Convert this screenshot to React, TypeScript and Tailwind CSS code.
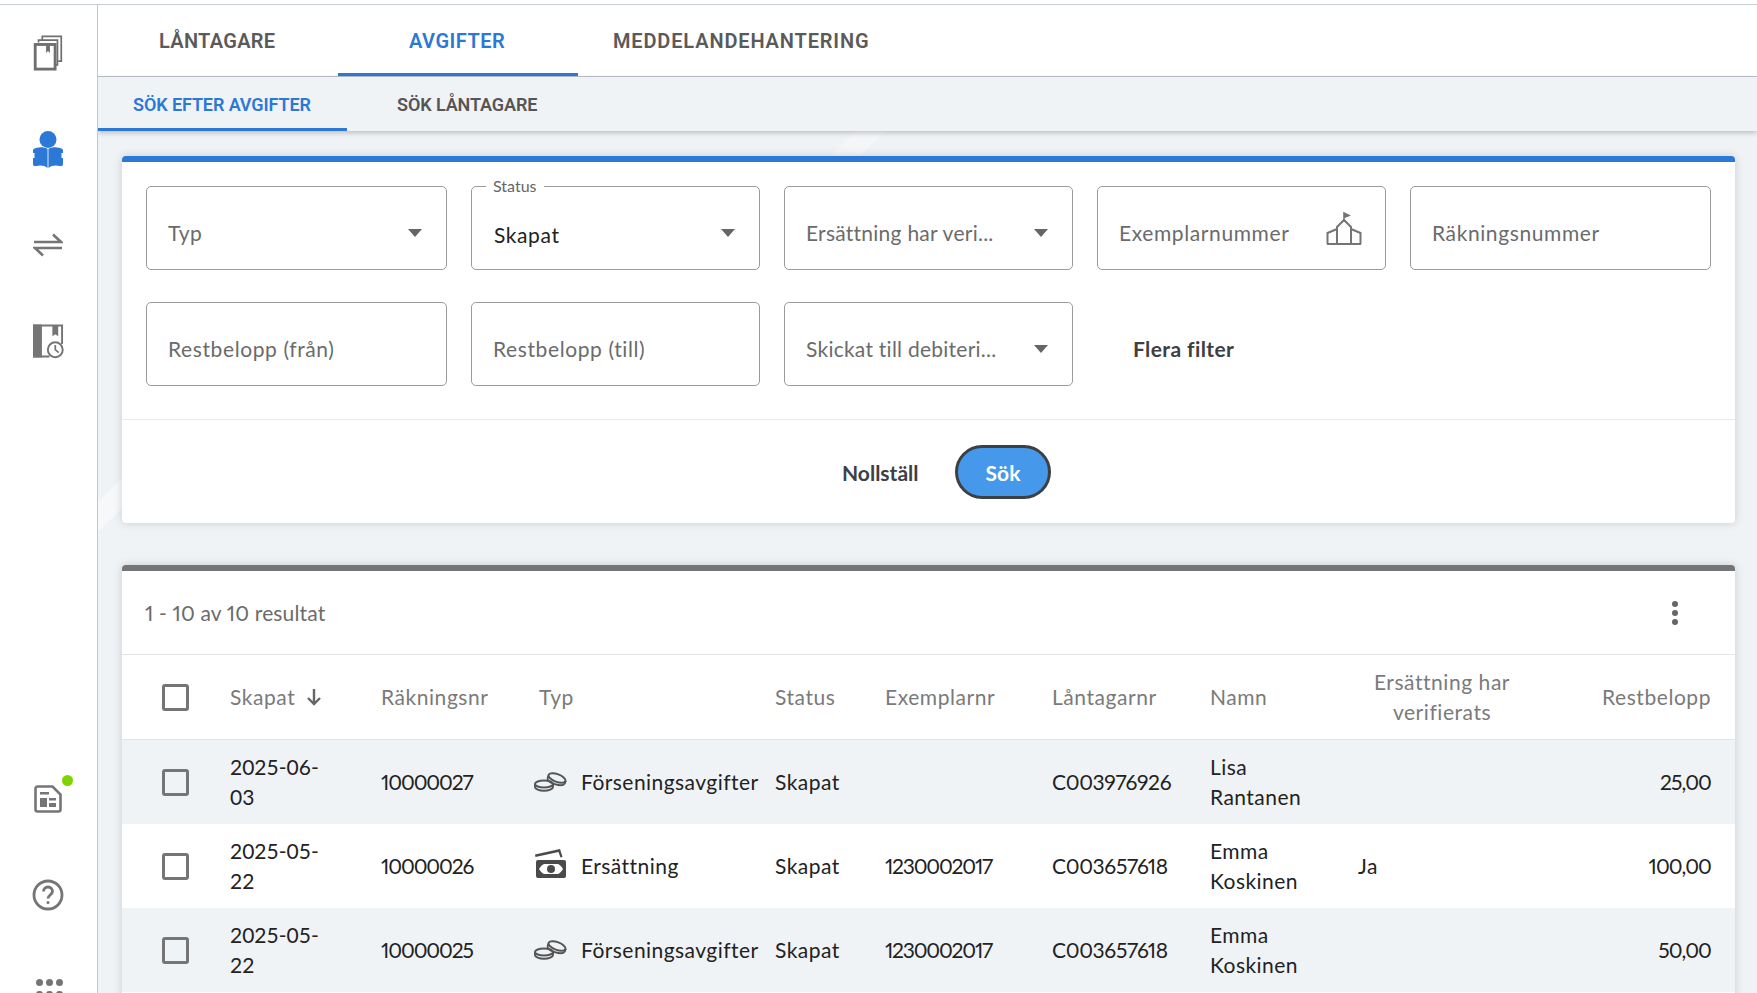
import React from "react";

const BODY = "[font-family:Lato,sans-serif]";
const TAB = "[font-family:Roboto,sans-serif]";

const Caret = () => (
  <svg width="16" height="8" viewBox="0 0 16 8" className="absolute right-[23px] top-[42px]">
    <path d="M1 0h14L8 8z" fill="#666" />
  </svg>
);

// library building with flag, sits in the Exemplarnummer field
const SchoolIcon = () => (
  <svg width="36" height="33" viewBox="0 0 36 33" fill="none" stroke="#757575" strokeWidth="2" className="absolute right-[23px] top-[25px]">
    <path d="M18 10V1l5 2.500-5 2" fill="#757575" strokeWidth="1.600" />
    <path d="M11 32V15l7-7 7 7v17M1.500 32V21l9.500-4M34.500 32V21L25 17M1 32h34" />
  </svg>
);

const CoinsIcon = () => (
  <svg width="34" height="20" viewBox="0 0 34 20" fill="none" stroke="#555" strokeWidth="2">
    <ellipse cx="10" cy="12" rx="9" ry="3.600" />
    <path d="M1 12v3c0 2 4 3.800 9 3.800s9-1.800 9-3.800v-3" />
    <ellipse cx="23" cy="6" rx="9" ry="3.800" transform="rotate(20 23 6)" fill="#f0f3f6" />
    <path d="M14.500 3.500l-.8 2.800c-.6 2 2.600 4.400 7 5.800 4.400 1.400 8.800 1.300 10-.6l1.200-3" />
  </svg>
);

const MoneyIcon = () => (
  <svg width="32" height="29" viewBox="0 0 32 29" className="-mt-[6px]">
    <path d="M1 5.500L26 0l2.500 8-2 .5-2-5.500L1.500 8z" fill="#4a4a4a" />
    <rect x="2" y="11" width="30" height="18" rx="2" fill="#4a4a4a" />
    <path d="M5 20c2-3 3-4 5-5h14c2 1 3 2 5 5-2 3-3 4-5 5H10c-2-1-3-2-5-5z" fill="#fff" />
    <circle cx="17" cy="20" r="4" fill="#4a4a4a" />
  </svg>
);

const Field = ({ label, w, select, value, legend, school }: { label?: string; w: string; select?: boolean; value?: string; legend?: string; school?: boolean }) => (
  <div className={`relative h-[84px] shrink-0 rounded-[5px] border border-[#9b9b9b] ${w}`}>
    {legend && (
      <span className="absolute left-[14px] top-[-10px] bg-white px-[7px] text-[16px] leading-[18px] text-[#666]">{legend}</span>
    )}
    {value ? (
      <span className="absolute left-[22px] top-[33px] text-[21px] leading-[30px] tracking-[0.6px] text-[#222]">{value}</span>
    ) : (
      <span className={`absolute left-[21px] top-[31px] text-[21px] leading-[30px] text-[#6b6b6b] ${select ? "tracking-[0.25px]" : "tracking-[0.6px]"}`}>{label}</span>
    )}
    {select && <Caret />}
    {school && <SchoolIcon />}
  </div>
);

const Checkbox = () => <div className="h-[27px] w-[27px] rounded-[3px] border-[3px] border-[#757575]" />;

type Row = { date: [string, string]; nr: string; kind: "fee" | "comp"; ex: string; borrower: string; name: [string, string]; ja?: boolean; amount: string };

const rows: Row[] = [
  { date: ["2025-06-", "03"], nr: "10000027", kind: "fee", ex: "", borrower: "C003976926", name: ["Lisa", "Rantanen"], amount: "25,00" },
  { date: ["2025-05-", "22"], nr: "10000026", kind: "comp", ex: "1230002017", borrower: "C003657618", name: ["Emma", "Koskinen"], ja: true, amount: "100,00" },
  { date: ["2025-05-", "22"], nr: "10000025", kind: "fee", ex: "1230002017", borrower: "C003657618", name: ["Emma", "Koskinen"], amount: "50,00" },
];

const GRID = "grid grid-cols-[108px_151px_153px_241px_110px_167px_158px_148px_168px_209px] items-center";

export default function App() {
  return (
    <div className={`relative flex h-[993px] w-[1757px] overflow-hidden bg-[#f0f3f6] text-[21px] ${BODY}`}>
      <div className="absolute left-0 top-0 z-30 h-[5px] w-full border-b border-[#c5ccd4] bg-white" />

      {/* sidebar */}
      <aside className="relative z-20 h-full w-[98px] shrink-0 border-r border-[#c0c7d2] bg-white">
        <svg width="30" height="36" viewBox="0 0 30 38" fill="none" stroke="#6f6f6f" strokeWidth="1.800" className="absolute left-[33px] top-[35px]">
          <rect x="1.500" y="10" width="21" height="26" fill="#fff" strokeWidth="3" />
          <path d="M5 8V5.500h20v26h-2M9 4.500V1.500h20v26h-3" />
          <path d="M13 11v8l2-2 2 2v-8" fill="#6f6f6f" stroke="none" />
        </svg>
        <svg width="30" height="37" viewBox="0 0 30 37" className="absolute left-[33px] top-[131px]">
          <circle cx="15" cy="8.500" r="8.500" fill="#2b78d6" />
          <path d="M3 17c4-1 8-1 12 1 4-2 8-2 12-1 2 .5 3 1 3 2.500V22h-1.500v5H30v6c0 1.500-1 2.500-3 2-4-1-8-1-12 2-4-3-8-3-12-2-2 .5-3-.5-3-2v-6h1.500v-5H0v-2.500C0 18 1 17.500 3 17z" fill="#2b78d6" />
          <path d="M15 18v19" stroke="#a9cdf3" strokeWidth="1.400" />
        </svg>
        <svg width="30" height="24" viewBox="0 0 30 24" fill="none" stroke="#757575" strokeWidth="2.600" className="absolute left-[33px] top-[233px]">
          <path d="M1 9h27L20 1.500M29 15H2l8 7.500" />
        </svg>
        <svg width="31" height="36" viewBox="0 0 32 36" className="absolute left-[33px] top-[323px]">
          <path d="M0 1h31v20h-2V3h-3v10l-3-2-3 2V3H9v30h8v2H0z" fill="#757575" />
          <path d="M0 1h9v34H0z" fill="#757575" />
          <circle cx="23" cy="27" r="7.700" fill="#fff" stroke="#757575" strokeWidth="2" />
          <path d="M23 22v5l3.500 3" fill="none" stroke="#757575" strokeWidth="1.800" />
        </svg>
        <svg width="28" height="28" viewBox="0 0 28 28" className="absolute left-[34px] top-[785px]">
          <path d="M1.500 3.500a2 2 0 012-2h15l8 8v15a2 2 0 01-2 2h-21a2 2 0 01-2-2z" fill="none" stroke="#757575" strokeWidth="2.600" />
          <path d="M6 7h9v2.500H6zM6 13h7v9H6zM15 13h7v2.500h-7zM15 18h7v4h-7z" fill="#757575" />
        </svg>
        <div className="absolute left-[62px] top-[775px] h-[11px] w-[11px] rounded-full bg-[#7ed300]" />
        <svg width="32" height="32" viewBox="0 0 32 32" fill="none" stroke="#757575" strokeWidth="2.800" className="absolute left-[32px] top-[879px]">
          <circle cx="16" cy="16" r="14" />
          <path d="M11.500 12.500a4.500 4.500 0 119 0c0 3-4.500 3.500-4.500 7" />
          <circle cx="16" cy="23.500" r="1.500" fill="#757575" stroke="none" />
        </svg>
        <div className="absolute left-[36px] top-[979px] grid grid-cols-3 gap-x-[3.500px] gap-y-[5px]">
          {Array.from({ length: 6 }).map((_, i) => (
            <div key={i} className="h-[6.500px] w-[6.500px] rounded-full bg-[#757575]" />
          ))}
        </div>
      </aside>

      <main className="relative flex-1">
        {/* decorative background sheens */}
        <div className="absolute left-[745px] top-[131px] h-[25px] w-[30px] -skew-x-[45deg] bg-[#f4f6f8]" />
        <div className="absolute left-0 top-[490px] h-[30px] w-[24px] -skew-y-[45deg] bg-[#f6f8fa]" />

        {/* top tabs */}
        <div className={`absolute left-0 top-[5px] flex h-[72px] w-full border-b border-[#b9c0c8] bg-white ${TAB} text-[20px] font-semibold text-[#5a5a5a]`}>
          <div className="absolute left-[61px] top-[23px] leading-[26px] tracking-[0.3px]">LÅNTAGARE</div>
          <div className="absolute left-[240px] top-0 h-[71px] w-[240px] border-b-[3px] border-[#2b78d6]" />
          <div className="absolute left-[311px] top-[23px] leading-[26px] tracking-[0.5px] text-[#2b78d6]">AVGIFTER</div>
          <div className="absolute left-[515px] top-[23px] leading-[26px] tracking-[0.85px]">MEDDELANDEHANTERING</div>
        </div>

        {/* sub tabs */}
        <div className={`absolute left-0 top-[77px] z-10 h-[54px] w-full bg-[#f0f3f6] shadow-[0_2px_5px_rgba(0,0,0,0.22)] ${TAB} text-[18px] font-semibold tracking-[-0.1px] text-[#555]`}>
          <div className="absolute left-0 top-0 h-[54px] w-[249px] border-b-[3px] border-[#2b78d6]" />
          <div className="absolute left-[35px] top-[16px] leading-[24px] text-[#2b78d6]">SÖK EFTER AVGIFTER</div>
          <div className="absolute left-[299px] top-[16px] leading-[24px]">SÖK LÅNTAGARE</div>
        </div>

        {/* filter card */}
        <section className="absolute left-[24px] top-[156px] h-[367px] w-[1613px] rounded-[4px] border-t-[6px] border-[#2b78d6] bg-white shadow-[0_0_10px_rgba(0,0,0,0.16)]">
          <div className="absolute left-[24px] top-[24px] flex gap-x-[24px]">
            <Field label="Typ" w="w-[301px]" select />
            <Field w="w-[289px]" legend="Status" value="Skapat" select />
            <Field label="Ersättning har veri..." w="w-[289px]" select />
            <Field label="Exemplarnummer" w="w-[289px]" school />
            <Field label="Räkningsnummer" w="w-[301px]" />
          </div>
          <div className="absolute left-[24px] top-[140px] flex gap-x-[24px]">
            <Field label="Restbelopp (från)" w="w-[301px]" />
            <Field label="Restbelopp (till)" w="w-[289px]" />
            <Field label="Skickat till debiteri..." w="w-[289px]" select />
            <div className="ml-[36px] pt-[32px] text-[21px] font-bold leading-[30px] tracking-[0.4px] text-[#3d4043]">Flera filter</div>
          </div>
          <div className="absolute left-0 top-[257px] h-px w-full bg-[#e8eaed]" />
          <div className="absolute left-[720px] top-[296px] text-[21px] font-bold leading-[30px] text-[#3d4043]">Nollställ</div>
          <button className="absolute left-[833px] top-[283px] h-[54px] w-[96px] rounded-full border-[3px] border-[#3d4043] bg-[#4698ea] pt-[1px] text-[21px] font-bold text-white">
            Sök
          </button>
        </section>

        {/* results card */}
        <section className="absolute left-[24px] top-[565px] h-[440px] w-[1613px] rounded-[4px] border-t-[6px] border-[#757575] bg-white shadow-[0_0_10px_rgba(0,0,0,0.16)]">
          <div className="relative h-[84px] border-b border-[#e3e5e8]">
            <span className="absolute left-[23px] top-[27px] leading-[30px] tracking-[0.15px] text-[#6b6b6b] proportional-nums">1 - 10 av 10 resultat</span>
            <div className="absolute left-[1550px] top-[30px] flex flex-col gap-[3px]">
              {[0, 1, 2].map((i) => (
                <div key={i} className="h-[6px] w-[6px] rounded-full bg-[#666]" />
              ))}
            </div>
          </div>
          <div className={`${GRID} h-[85px] border-b border-[#e3e5e8] tracking-[0.55px] text-[#7a7a7a]`}>
            <div className="pl-[40px]"><Checkbox /></div>
            <div className="flex items-center gap-[11px]">
              Skapat
              <svg width="16" height="18" viewBox="0 0 16 18" fill="none" stroke="#666" strokeWidth="2.400"><path d="M8 1v15M2 10l6 6 6-6" /></svg>
            </div>
            <div>Räkningsnr</div>
            <div className="pl-[5px]">Typ</div>
            <div>Status</div>
            <div>Exemplarnr</div>
            <div>Låntagarnr</div>
            <div>Namn</div>
            <div className="text-center leading-[30px]">Ersättning har<br />verifierats</div>
            <div className="pr-[24px] text-right">Restbelopp</div>
          </div>
          {rows.map((r, i) => (
            <div key={r.nr} className={`${GRID} h-[84px] leading-[30px] tracking-[0.45px] text-[#222] ${i % 2 === 0 ? "bg-[#f0f3f6]" : "bg-white"}`}>
              <div className="pl-[40px]"><Checkbox /></div>
              <div className="tracking-normal">{r.date[0]}<br />{r.date[1]}</div>
              <div className="proportional-nums tracking-[-1.1px]">{r.nr}</div>
              <div className="flex items-center">
                <span className="flex w-[47px] shrink-0 items-center">{r.kind === "fee" ? <CoinsIcon /> : <MoneyIcon />}</span>
                {r.kind === "fee" ? "Förseningsavgifter" : "Ersättning"}
              </div>
              <div>Skapat</div>
              <div className="proportional-nums tracking-[-1.2px]">{r.ex}</div>
              <div className="proportional-nums tracking-[-0.35px]">{r.borrower}</div>
              <div>{r.name[0]}<br />{r.name[1]}</div>
              <div>{r.ja ? "Ja" : ""}</div>
              <div className="pr-[24px] text-right proportional-nums tracking-[-0.9px]">{r.amount}</div>
            </div>
          ))}
        </section>
      </main>
    </div>
  );
}
